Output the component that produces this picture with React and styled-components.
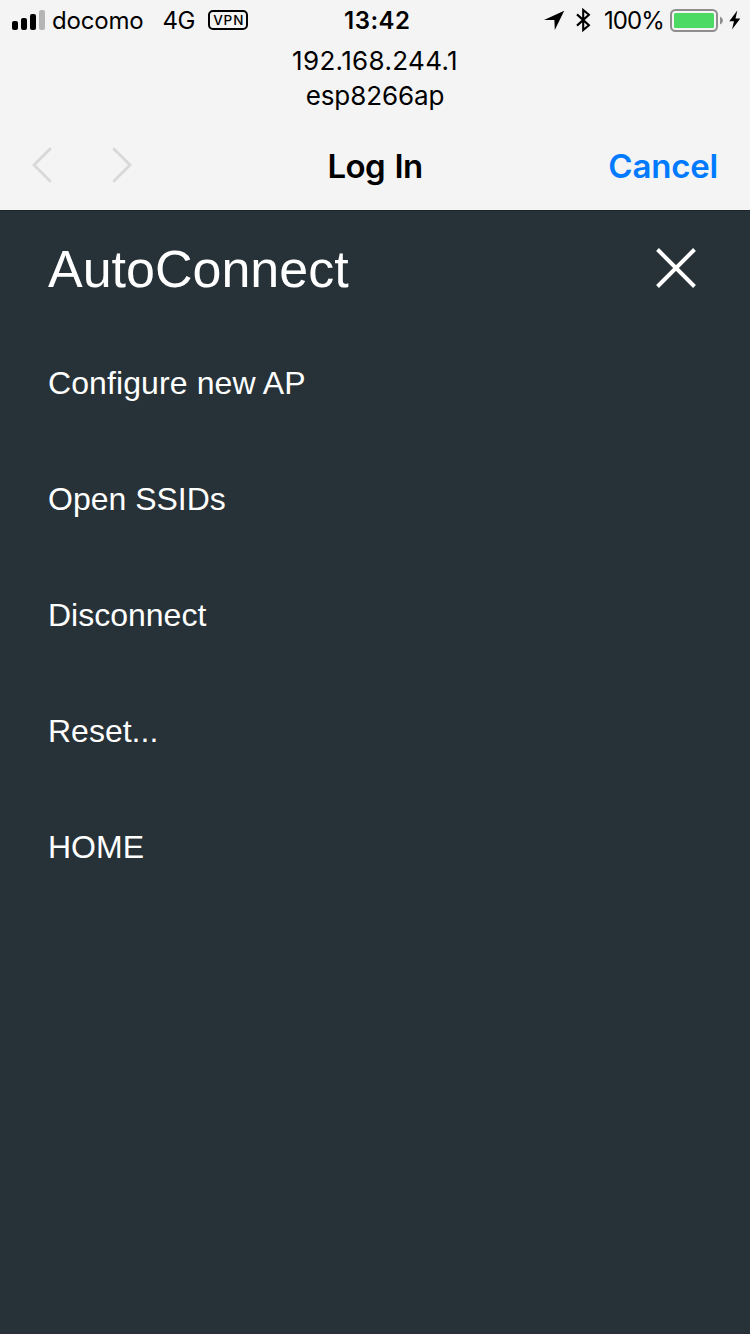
import React from "react";
import styled, { createGlobalStyle } from "styled-components";

const GlobalStyle = createGlobalStyle`
  *, *::before, *::after { box-sizing: border-box; }
  body { margin: 0; background: #f4f4f4; }
`;

const Screen = styled.div`
  display: flex;
  flex-direction: column;
  width: 750px;
  height: 1334px;
  background: #f4f4f4;
  color: #000;
  font-family: Inter, "Liberation Sans", sans-serif;
  overflow: hidden;
`;

const StatusBar = styled.header`
  display: grid;
  grid-template-columns: 344px 1fr auto;
  align-items: center;
  height: 40px;
  padding: 0 9px 0 0;
`;

const StatusGroup = styled.div`
  display: flex;
  align-items: center;
  height: 40px;
  padding-left: ${(p) => p.$inset || 0}px;
`;

const StatusText = styled.span`
  font-size: 24px;
  line-height: 38px;
  padding-top: 2px;
  font-weight: ${(p) => p.$weight || 400};
  letter-spacing: ${(p) => p.$tracking || 0}px;
  margin-left: ${(p) => p.$gap || 0}px;
  white-space: nowrap;
`;

const VpnBadge = styled.span`
  display: flex;
  align-items: center;
  justify-content: center;
  width: 40px;
  height: 20px;
  margin-left: 13px;
  border: 2px solid #000;
  border-radius: 5px;
  font-size: 13.5px;
  line-height: 16px;
  font-weight: 500;
  letter-spacing: 0.9px;
  text-indent: 1px;
`;

const Icon = styled.svg`
  display: block;
  flex: none;
  margin-left: ${(p) => p.$gap || 0}px;
`;

const Network = styled.div`
  display: flex;
  flex-direction: column;
  align-items: center;
  height: 82px;
  padding-top: 3px;
`;

const NetworkLine = styled.div`
  font-size: 26px;
  line-height: 35px;
  letter-spacing: ${(p) => p.$tracking}px;
`;

const NavBar = styled.nav`
  display: grid;
  grid-template-columns: 1fr auto 1fr;
  align-items: center;
  height: 88px;
  padding: 0 32px;
`;

const NavArrows = styled.div`
  display: flex;
  gap: 60px;
  padding-bottom: 2px;
`;

const NavTitle = styled.h1`
  margin: 0;
  font-size: 33px;
  line-height: 40px;
  font-weight: 600;
  letter-spacing: -0.7px;
  word-spacing: 2px;
`;

const NavAction = styled.button`
  justify-self: end;
  padding: 0;
  border: 0;
  background: none;
  color: #007aff;
  font: 600 33px/40px Inter, "Liberation Sans", sans-serif;
  letter-spacing: -0.2px;
`;

const Portal = styled.main`
  flex: 1;
  display: flex;
  flex-direction: column;
  background: #263238;
  color: #fff;
  border-top: 1px solid #1d262b;
  border-bottom: 1px solid #2d2a3a;
  font-family: "Liberation Sans", Arial, sans-serif;
`;

const PortalHeader = styled.div`
  display: flex;
  align-items: center;
  justify-content: space-between;
  height: 114px;
  padding: 0 54px 0 48px;
`;

const Brand = styled.h2`
  margin: 1px 0 0;
  font-size: 52px;
  line-height: 60px;
  font-weight: 400;
`;

const MenuList = styled.ul`
  margin: 0;
  padding: 0;
  list-style: none;
`;

const MenuItem = styled.li`
  display: flex;
  align-items: center;
  height: 116px;
  padding-left: 48px;
  font-size: 32px;
  line-height: 40px;
  letter-spacing: ${(p) => p.$tracking || 0}px;
`;

const menu = [
  { label: "Configure new AP", tracking: 0.1 },
  { label: "Open SSIDs" },
  { label: "Disconnect" },
  { label: "Reset..." },
  { label: "HOME" },
];

const Signal = () => (
  <Icon width="33" height="20" viewBox="0 0 33 20">
    <rect x="0" y="11" width="6" height="9" rx="2" />
    <rect x="9" y="8" width="6" height="12" rx="2" />
    <rect x="18" y="4" width="6" height="16" rx="2" />
    <rect x="27" y="0" width="6" height="20" rx="2" fill="#b5b5b5" />
  </Icon>
);

const Location = () => (
  <Icon width="21" height="20" viewBox="0 0 21 20">
    <path d="M20.2 0.8 L0 9.9 L10.4 10.1 L10.8 20 Z" />
  </Icon>
);

const Bluetooth = () => (
  <Icon $gap={11} width="15" height="24" viewBox="0 0 15 24">
    <path
      d="M1 6.4 L12.9 17.2 L7.2 22 V2 L12.9 6.8 L1 17.6"
      fill="none"
      stroke="#000"
      strokeWidth="2.1"
    />
  </Icon>
);

const Battery = () => (
  <Icon $gap={6} width="54" height="24" viewBox="0 0 54 24">
    <rect x="1" y="2" width="46" height="21" rx="4.5" fill="none" stroke="#8e8e8e" strokeWidth="2" />
    <rect x="4" y="5" width="40" height="15" rx="1.5" fill="#4cd964" />
    <path d="M50 8.5 Q53 10 53 12.5 Q53 15 50 16.5 Z" fill="#8e8e8e" />
  </Icon>
);

const Bolt = () => (
  <Icon $gap={5} width="12" height="20" viewBox="0 0 12 20">
    <path d="M8.3 0.5 L0.3 11.2 H5 L3 19.5 L11.3 8.4 H6.5 Z" />
  </Icon>
);

const Chevron = ({ points }) => (
  <Icon width="20" height="36" viewBox="0 0 20 36">
    <polyline
      points={points}
      fill="none"
      stroke="#d8d8d8"
      strokeWidth="2.8"
      strokeLinecap="round"
      strokeLinejoin="miter"
    />
  </Icon>
);

const Close = () => (
  <Icon width="40" height="40" viewBox="0 0 40 40">
    <path d="M1.5 1.5 L38.5 38.5 M38.5 1.5 L1.5 38.5" stroke="#fff" strokeWidth="4" />
  </Icon>
);

export default function App() {
  return (
    <Screen>
      <GlobalStyle />
      <StatusBar>
        <StatusGroup $inset={12}>
          <Signal />
          <StatusText $gap={7} $tracking={-0.2}>docomo</StatusText>
          <StatusText $gap={19} $tracking={-0.3}>4G</StatusText>
          <VpnBadge>VPN</VpnBadge>
        </StatusGroup>
        <StatusText $weight={600} $tracking={0.5}>13:42</StatusText>
        <StatusGroup>
          <Location />
          <Bluetooth />
          <StatusText $gap={13} $tracking={-0.9}>100%</StatusText>
          <Battery />
          <Bolt />
        </StatusGroup>
      </StatusBar>
      <Network>
        <NetworkLine $tracking={0.35}>192.168.244.1</NetworkLine>
        <NetworkLine $tracking={-0.1}>esp8266ap</NetworkLine>
      </Network>
      <NavBar>
        <NavArrows>
          <Chevron points="18,2 2,18 18,34" />
          <Chevron points="2,2 18,18 2,34" />
        </NavArrows>
        <NavTitle>Log In</NavTitle>
        <NavAction>Cancel</NavAction>
      </NavBar>
      <Portal>
        <PortalHeader>
          <Brand>AutoConnect</Brand>
          <Close />
        </PortalHeader>
        <MenuList>
          {menu.map(({ label, tracking }) => (
            <MenuItem key={label} $tracking={tracking}>{label}</MenuItem>
          ))}
        </MenuList>
      </Portal>
    </Screen>
  );
}
